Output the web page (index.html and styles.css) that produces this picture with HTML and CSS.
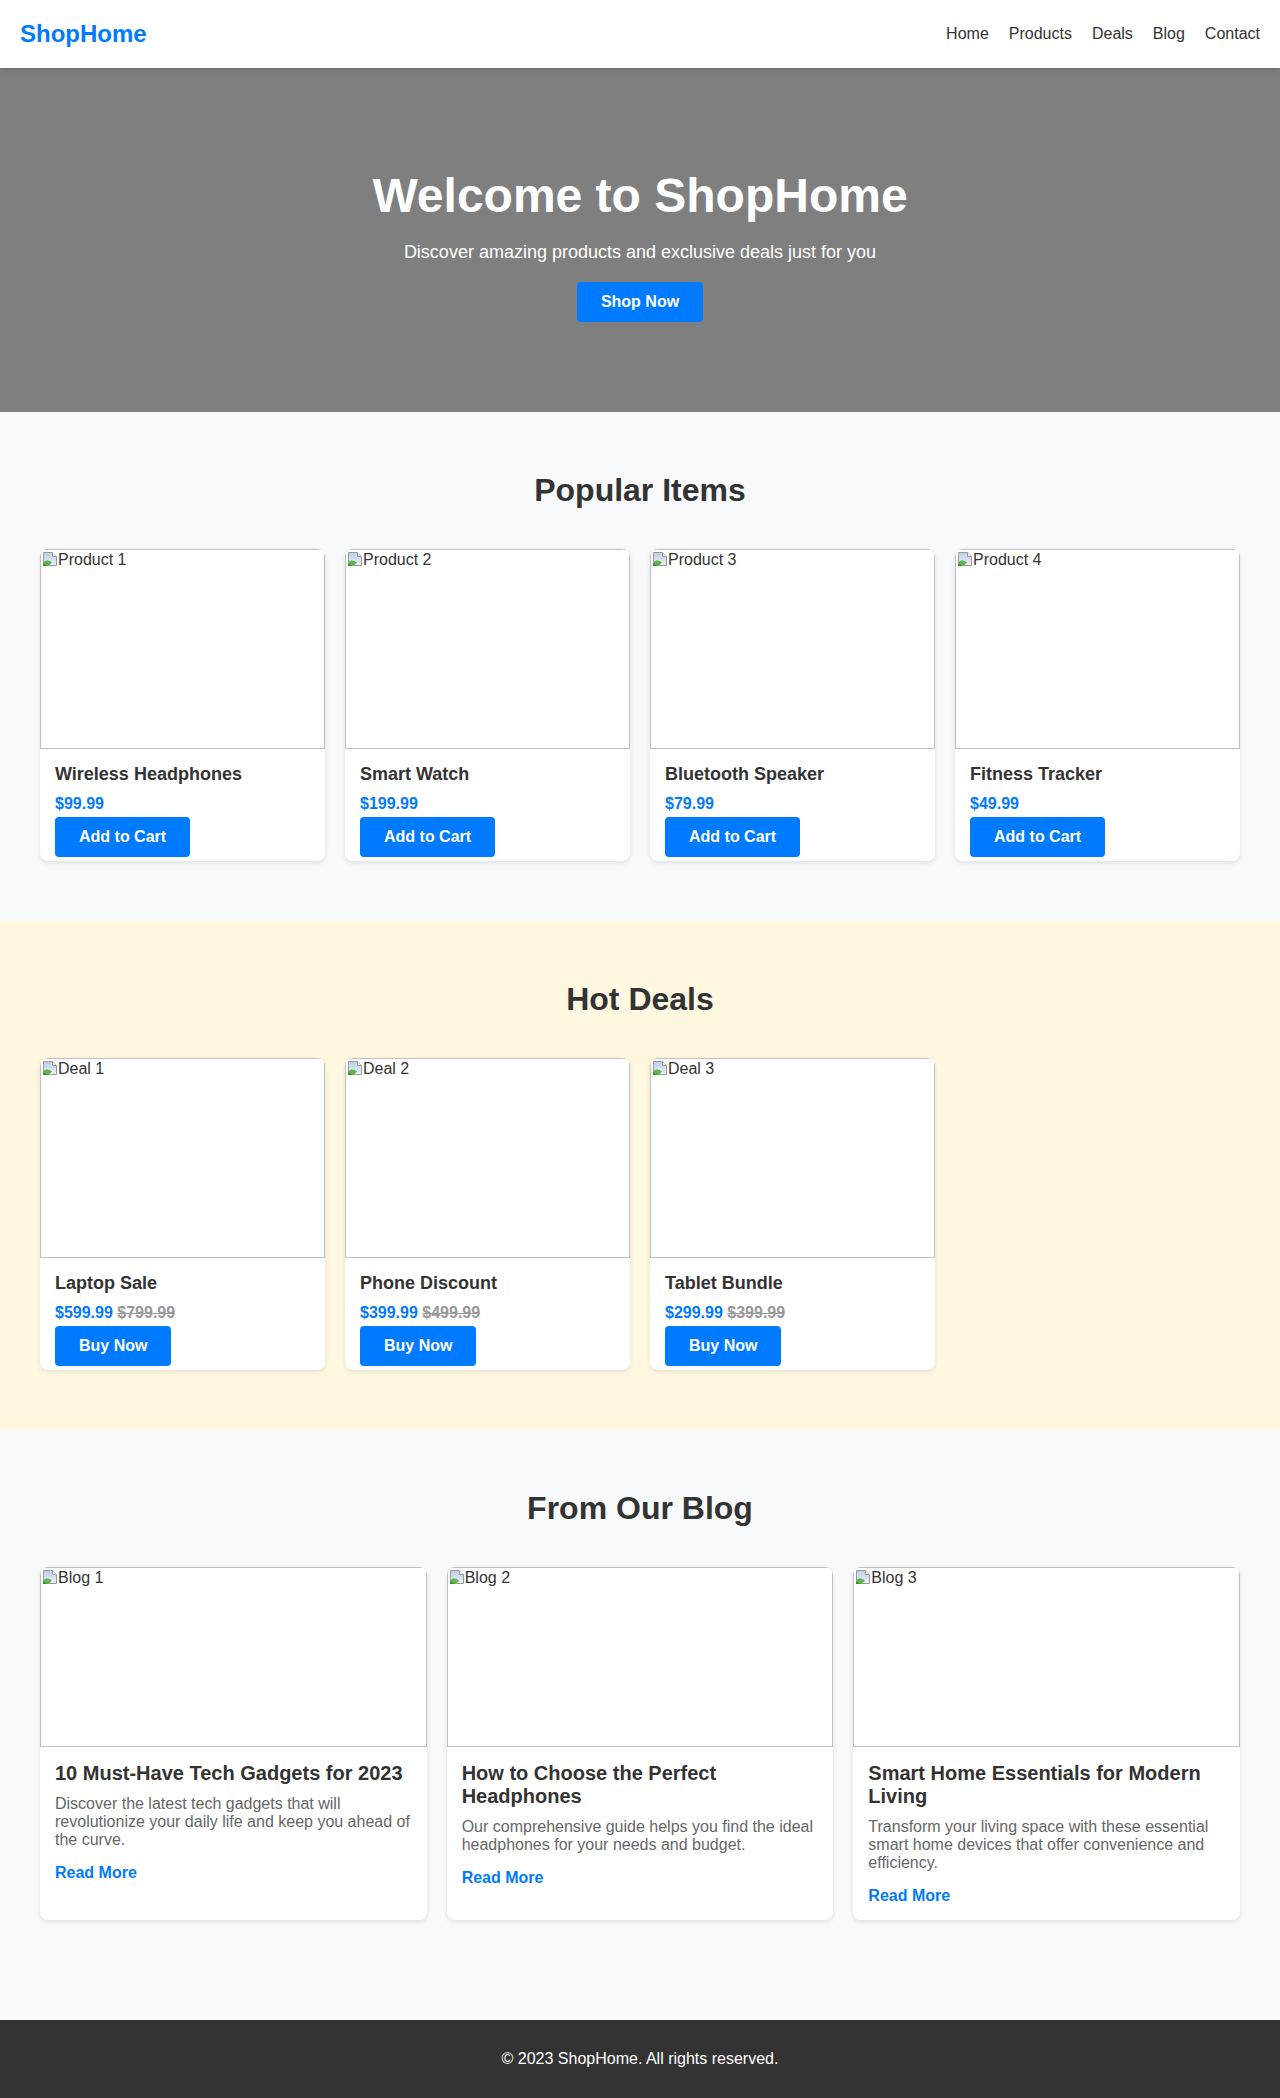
FILE: index.html
```html
<!DOCTYPE html>
<html lang="en">
<head>
<meta charset="utf-8">
<title>ShopHome</title>
<link rel="stylesheet" href="styles.css">
</head>
<body>
<svg class="defs" width="0" height="0" aria-hidden="true"><defs><linearGradient id="sk" x1="0" y1="0" x2="0" y2="1"><stop offset="0" stop-color="#b9cde8"/><stop offset="1" stop-color="#eef3fa"/></linearGradient></defs></svg>
<header class="site-header">
  <div class="logo">ShopHome</div>
  <nav class="nav">
    <a href="#">Home</a>
    <a href="#">Products</a>
    <a href="#">Deals</a>
    <a href="#">Blog</a>
    <a href="#">Contact</a>
  </nav>
</header>

<section class="hero">
  <h1>Welcome to ShopHome</h1>
  <p>Discover amazing products and exclusive deals just for you</p>
  <a class="btn" href="#">Shop Now</a>
</section>

<section class="section">
  <div class="container">
    <h2 class="section-title">Popular Items</h2>
    <div class="grid grid-products">
      <div class="card">
        <div class="img-ph"><svg class="broken" viewBox="0 0 16 16"><path d="M1.5 1.5h9l4 4v9h-13z" fill="url(#sk)" stroke="#9a9a9a"/><path d="M10.5 1.5v4h4" fill="#fff" stroke="#9a9a9a"/><path d="M1 15V11.5C4 8.5 7 9 10 11.5L6.5 15z" fill="#5fb548"/><path d="M1 15h5L1 12.5z" fill="#3d8b2f"/></svg><span>Product 1</span></div>
        <div class="card-body">
          <h3>Wireless Headphones</h3>
          <p class="price">$99.99</p>
          <a class="btn" href="#">Add to Cart</a>
        </div>
      </div>
      <div class="card">
        <div class="img-ph"><svg class="broken" viewBox="0 0 16 16"><path d="M1.5 1.5h9l4 4v9h-13z" fill="url(#sk)" stroke="#9a9a9a"/><path d="M10.5 1.5v4h4" fill="#fff" stroke="#9a9a9a"/><path d="M1 15V11.5C4 8.5 7 9 10 11.5L6.5 15z" fill="#5fb548"/><path d="M1 15h5L1 12.5z" fill="#3d8b2f"/></svg><span>Product 2</span></div>
        <div class="card-body">
          <h3>Smart Watch</h3>
          <p class="price">$199.99</p>
          <a class="btn" href="#">Add to Cart</a>
        </div>
      </div>
      <div class="card">
        <div class="img-ph"><svg class="broken" viewBox="0 0 16 16"><path d="M1.5 1.5h9l4 4v9h-13z" fill="url(#sk)" stroke="#9a9a9a"/><path d="M10.5 1.5v4h4" fill="#fff" stroke="#9a9a9a"/><path d="M1 15V11.5C4 8.5 7 9 10 11.5L6.5 15z" fill="#5fb548"/><path d="M1 15h5L1 12.5z" fill="#3d8b2f"/></svg><span>Product 3</span></div>
        <div class="card-body">
          <h3>Bluetooth Speaker</h3>
          <p class="price">$79.99</p>
          <a class="btn" href="#">Add to Cart</a>
        </div>
      </div>
      <div class="card">
        <div class="img-ph"><svg class="broken" viewBox="0 0 16 16"><path d="M1.5 1.5h9l4 4v9h-13z" fill="url(#sk)" stroke="#9a9a9a"/><path d="M10.5 1.5v4h4" fill="#fff" stroke="#9a9a9a"/><path d="M1 15V11.5C4 8.5 7 9 10 11.5L6.5 15z" fill="#5fb548"/><path d="M1 15h5L1 12.5z" fill="#3d8b2f"/></svg><span>Product 4</span></div>
        <div class="card-body">
          <h3>Fitness Tracker</h3>
          <p class="price">$49.99</p>
          <a class="btn" href="#">Add to Cart</a>
        </div>
      </div>
    </div>
  </div>
</section>

<section class="section deals">
  <div class="container">
    <h2 class="section-title">Hot Deals</h2>
    <div class="grid grid-products">
      <div class="card">
        <div class="img-ph"><svg class="broken" viewBox="0 0 16 16"><path d="M1.5 1.5h9l4 4v9h-13z" fill="url(#sk)" stroke="#9a9a9a"/><path d="M10.5 1.5v4h4" fill="#fff" stroke="#9a9a9a"/><path d="M1 15V11.5C4 8.5 7 9 10 11.5L6.5 15z" fill="#5fb548"/><path d="M1 15h5L1 12.5z" fill="#3d8b2f"/></svg><span>Deal 1</span></div>
        <div class="card-body">
          <h3>Laptop Sale</h3>
          <p class="price">$599.99 <span class="old">$799.99</span></p>
          <a class="btn" href="#">Buy Now</a>
        </div>
      </div>
      <div class="card">
        <div class="img-ph"><svg class="broken" viewBox="0 0 16 16"><path d="M1.5 1.5h9l4 4v9h-13z" fill="url(#sk)" stroke="#9a9a9a"/><path d="M10.5 1.5v4h4" fill="#fff" stroke="#9a9a9a"/><path d="M1 15V11.5C4 8.5 7 9 10 11.5L6.5 15z" fill="#5fb548"/><path d="M1 15h5L1 12.5z" fill="#3d8b2f"/></svg><span>Deal 2</span></div>
        <div class="card-body">
          <h3>Phone Discount</h3>
          <p class="price">$399.99 <span class="old">$499.99</span></p>
          <a class="btn" href="#">Buy Now</a>
        </div>
      </div>
      <div class="card">
        <div class="img-ph"><svg class="broken" viewBox="0 0 16 16"><path d="M1.5 1.5h9l4 4v9h-13z" fill="url(#sk)" stroke="#9a9a9a"/><path d="M10.5 1.5v4h4" fill="#fff" stroke="#9a9a9a"/><path d="M1 15V11.5C4 8.5 7 9 10 11.5L6.5 15z" fill="#5fb548"/><path d="M1 15h5L1 12.5z" fill="#3d8b2f"/></svg><span>Deal 3</span></div>
        <div class="card-body">
          <h3>Tablet Bundle</h3>
          <p class="price">$299.99 <span class="old">$399.99</span></p>
          <a class="btn" href="#">Buy Now</a>
        </div>
      </div>
    </div>
  </div>
</section>

<section class="section blog">
  <div class="container">
    <h2 class="section-title">From Our Blog</h2>
    <div class="grid grid-blog">
      <div class="card">
        <div class="img-ph img-blog"><svg class="broken" viewBox="0 0 16 16"><path d="M1.5 1.5h9l4 4v9h-13z" fill="url(#sk)" stroke="#9a9a9a"/><path d="M10.5 1.5v4h4" fill="#fff" stroke="#9a9a9a"/><path d="M1 15V11.5C4 8.5 7 9 10 11.5L6.5 15z" fill="#5fb548"/><path d="M1 15h5L1 12.5z" fill="#3d8b2f"/></svg><span>Blog 1</span></div>
        <div class="blog-body">
          <h3>10 Must-Have Tech Gadgets for 2023</h3>
          <p>Discover the latest tech gadgets that will revolutionize your daily life and keep you ahead of the curve.</p>
          <a class="read-more" href="#">Read More</a>
        </div>
      </div>
      <div class="card">
        <div class="img-ph img-blog"><svg class="broken" viewBox="0 0 16 16"><path d="M1.5 1.5h9l4 4v9h-13z" fill="url(#sk)" stroke="#9a9a9a"/><path d="M10.5 1.5v4h4" fill="#fff" stroke="#9a9a9a"/><path d="M1 15V11.5C4 8.5 7 9 10 11.5L6.5 15z" fill="#5fb548"/><path d="M1 15h5L1 12.5z" fill="#3d8b2f"/></svg><span>Blog 2</span></div>
        <div class="blog-body">
          <h3>How to Choose the Perfect Headphones</h3>
          <p>Our comprehensive guide helps you find the ideal headphones for your needs and budget.</p>
          <a class="read-more" href="#">Read More</a>
        </div>
      </div>
      <div class="card">
        <div class="img-ph img-blog"><svg class="broken" viewBox="0 0 16 16"><path d="M1.5 1.5h9l4 4v9h-13z" fill="url(#sk)" stroke="#9a9a9a"/><path d="M10.5 1.5v4h4" fill="#fff" stroke="#9a9a9a"/><path d="M1 15V11.5C4 8.5 7 9 10 11.5L6.5 15z" fill="#5fb548"/><path d="M1 15h5L1 12.5z" fill="#3d8b2f"/></svg><span>Blog 3</span></div>
        <div class="blog-body">
          <h3>Smart Home Essentials for Modern Living</h3>
          <p>Transform your living space with these essential smart home devices that offer convenience and efficiency.</p>
          <a class="read-more" href="#">Read More</a>
        </div>
      </div>
    </div>
  </div>
</section>

<footer class="site-footer">
  <p>&copy; 2023 ShopHome. All rights reserved.</p>
</footer>
</body>
</html>
```

FILE: styles.css
```css
* {
  box-sizing: border-box;
}

body {
  margin: 0;
  font-family: "Liberation Sans", Arial, Helvetica, sans-serif;
  font-size: 16px;
  color: #333;
  background: #f8f9fa;
}

a {
  text-decoration: none;
}

.defs {
  display: block;
  width: 0;
  height: 0;
  overflow: hidden;
}

.site-header {
  position: relative;
  z-index: 2;
  display: flex;
  justify-content: space-between;
  align-items: center;
  padding: 20px;
  background: #fff;
  box-shadow: 0 2px 5px rgba(0, 0, 0, 0.12);
}

.logo {
  font-size: 24px;
  font-weight: bold;
  color: #007bff;
}

.nav {
  display: flex;
  gap: 20px;
}

.nav a {
  color: #333;
  font-size: 16px;
}

.hero {
  background: #7f7f7f;
  color: #fff;
  text-align: center;
  padding: 100px 20px 90px;
}

.hero h1 {
  margin: 0 0 19px;
  font-size: 48px;
  font-weight: bold;
}

.hero p {
  margin: 0 0 19px;
  font-size: 18px;
}

.btn {
  display: inline-block;
  background: #007bff;
  color: #fff;
  font-weight: bold;
  font-size: 16px;
  padding: 11px 24px;
  border-radius: 4px;
}

.section {
  padding: 60px 20px;
}

.deals {
  background: #fff8e1;
}

.blog {
  margin-bottom: 40px;
}

.container {
  max-width: 1200px;
  margin: 0 auto;
}

.section-title {
  margin: 0 0 40px;
  text-align: center;
  font-size: 32px;
  font-weight: bold;
  color: #333;
}

.grid {
  display: grid;
  gap: 20px;
}

.grid-products {
  grid-template-columns: repeat(auto-fill, minmax(250px, 1fr));
}

.grid-blog {
  grid-template-columns: repeat(auto-fill, minmax(300px, 1fr));
}

.card {
  background: #fff;
  border-radius: 8px;
  overflow: hidden;
  box-shadow: 0 2px 5px rgba(0, 0, 0, 0.1);
}

.img-ph {
  display: flex;
  align-items: flex-start;
  height: 200px;
  border: 1px solid #c0c0c0;
  color: #333;
  font-size: 16px;
  line-height: 18px;
}

.img-blog {
  height: 180px;
}

.broken {
  width: 16px;
  height: 16px;
  margin: 1px 0 0 1px;
  flex: none;
}

.img-ph span {
  padding-top: 1px;
}

.card-body {
  padding: 15px 15px 4px;
}

.card-body h3 {
  margin: 0 0 10px;
  font-size: 18px;
  color: #333;
}

.price {
  margin: 0 0 4px;
  font-weight: bold;
  color: #007bff;
}

.old {
  color: #999;
  text-decoration: line-through;
}

.blog-body {
  padding: 15px;
}

.blog-body h3 {
  margin: 0 0 10px;
  font-size: 20px;
  color: #333;
}

.blog-body p {
  margin: 0 0 15px;
  color: #666;
}

.read-more {
  color: #007bff;
  font-weight: bold;
}

.site-footer {
  background: #333;
  color: #fff;
  text-align: center;
  padding: 30px 20px;
}

.site-footer p {
  margin: 0;
}
```
